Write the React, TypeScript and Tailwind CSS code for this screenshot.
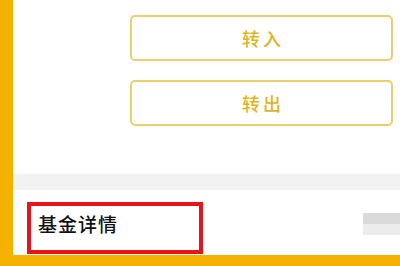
export default function App() {
  return (
    <div className="w-[400px] h-[266px] flex flex-col bg-[#f4b100] overflow-hidden" style={{ fontFamily: '"Noto Sans CJK SC", "Noto Sans", sans-serif' }}>
      <div className="flex h-[255px]">
        <div className="w-[13px] shrink-0 bg-[#f4b100]" />
        <div className="flex-1 bg-white flex flex-col">
          <div className="h-[174px] pt-[15px] pl-[117px] pr-[7px] flex flex-col gap-[19px]">
            <div className="h-[46px] border-2 border-[#ebcf6c] rounded-[5px] flex items-center justify-center text-[#e0b424] text-[18px] font-medium tracking-[3px] pl-[3px]">转入</div>
            <div className="h-[46px] border-2 border-[#ebcf6c] rounded-[5px] flex items-center justify-center text-[#e0b424] text-[18px] font-medium tracking-[3px] pl-[3px]">转出</div>
          </div>
          <div className="h-[16px] bg-[#f2f2f2]" />
          <div className="flex-1 flex items-start pt-[12px] pl-[14px]">
            <div className="w-[176px] h-[52px] border-[4px] border-[#e8131b] flex items-start pt-[6px] pl-[7px] text-[19px] leading-[24px] font-medium text-[#111111] tracking-[1px]">基金详情</div>
            <div className="ml-auto mt-[11px] w-[37px] flex flex-col">
              <div className="h-[11px] bg-[#dadada]" />
              <div className="h-[11px] bg-[#ececec]" />
            </div>
          </div>
        </div>
      </div>
      <div className="flex-1 bg-[#f4b100]" />
    </div>
  );
}
